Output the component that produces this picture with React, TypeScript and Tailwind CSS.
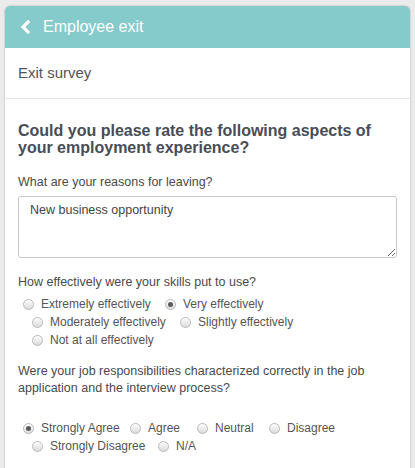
import React from 'react';

const Radio = ({ checked = false }: { checked?: boolean }) => (
  <span className="relative inline-flex h-[11px] w-[11px] shrink-0 items-center justify-center rounded-full border border-[#b9b9b9] bg-gradient-to-b from-[#fbfbfb] to-[#dcdcdc] shadow-[inset_0_1px_0_rgba(255,255,255,0.8)]">
    {checked && <span className="h-[5px] w-[5px] rounded-full bg-[#5a5a5a]"></span>}
  </span>
);

type Opt = { label: string; w?: string; checked?: boolean };

const RadioRow = ({ items, pad }: { items: Opt[]; pad: string }) => (
  <div className={`flex h-[18px] items-center ${pad}`}>
    {items.map((o) => (
      <label key={o.label} className={`flex items-center gap-[7px] ${o.w ?? ''}`}>
        <Radio checked={o.checked} />
        <span className="whitespace-nowrap text-[12px] text-[#555]">{o.label}</span>
      </label>
    ))}
  </div>
);

export default function App() {
  return (
    <div className="min-h-screen bg-[#ebebeb] px-[5px] pt-[6px] font-['Liberation_Sans',Arial,sans-serif]">
      <div className="min-h-[470px] overflow-hidden rounded-t-[5px] bg-white shadow-[0_0_2px_rgba(0,0,0,0.3)]">
        <div className="flex h-[42px] items-center bg-[#86cbcb] pl-[15px]">
          <svg width="11" height="14" viewBox="0 0 11 14" className="mr-[12px]">
            <polyline points="8,2 3,7 8,12" fill="none" stroke="white" strokeWidth="3.2" strokeLinecap="square" strokeLinejoin="miter" />
          </svg>
          <span className="text-[16px] text-white">Employee exit</span>
        </div>

        <div className="flex h-[51px] items-center border-b border-[#e6e6e6] px-[13px]">
          <span className="text-[15px] text-[#555]">Exit survey</span>
        </div>

        <div className="px-[13px] pt-[23px]">
          <h2 className="text-[16px] font-bold leading-[17px] text-[#484d57]">
            Could you please rate the following aspects of your employment experience?
          </h2>

          <p className="mt-[18px] text-[12.5px] leading-[16px] text-[#4a4a4a]">What are your reasons for leaving?</p>
          <textarea
            readOnly
            defaultValue="New business opportunity"
            className="mt-[6px] block h-[62px] w-[379px] resize-y rounded-[3px] border border-[#c8c8c8] px-[11px] pt-[5px] text-[12.5px] leading-[16px] text-[#444] outline-none"
          />

          <p className="mt-[16px] text-[12.5px] leading-[16px] text-[#4a4a4a]">How effectively were your skills put to use?</p>
          <div className="mt-[5px]">
            <RadioRow
              pad="pl-[5px]"
              items={[
                { label: 'Extremely effectively', w: 'w-[142px]' },
                { label: 'Very effectively', checked: true },
              ]}
            />
            <RadioRow
              pad="pl-[14px]"
              items={[
                { label: 'Moderately effectively', w: 'w-[148px]' },
                { label: 'Slightly effectively' },
              ]}
            />
            <RadioRow pad="pl-[14px]" items={[{ label: 'Not at all effectively' }]} />
          </div>

          <p className="mt-[14px] text-[12.5px] leading-[17px] text-[#4a4a4a]">
            Were your job responsibilities characterized correctly in the job application and the interview process?
          </p>
          <div className="mt-[22px]">
            <RadioRow
              pad="pl-[5px]"
              items={[
                { label: 'Strongly Agree', w: 'w-[107px]', checked: true },
                { label: 'Agree', w: 'w-[67px]' },
                { label: 'Neutral', w: 'w-[72px]' },
                { label: 'Disagree' },
              ]}
            />
            <RadioRow
              pad="pl-[14px]"
              items={[
                { label: 'Strongly Disagree', w: 'w-[126px]' },
                { label: 'N/A' },
              ]}
            />
          </div>
        </div>
      </div>
    </div>
  );
}
